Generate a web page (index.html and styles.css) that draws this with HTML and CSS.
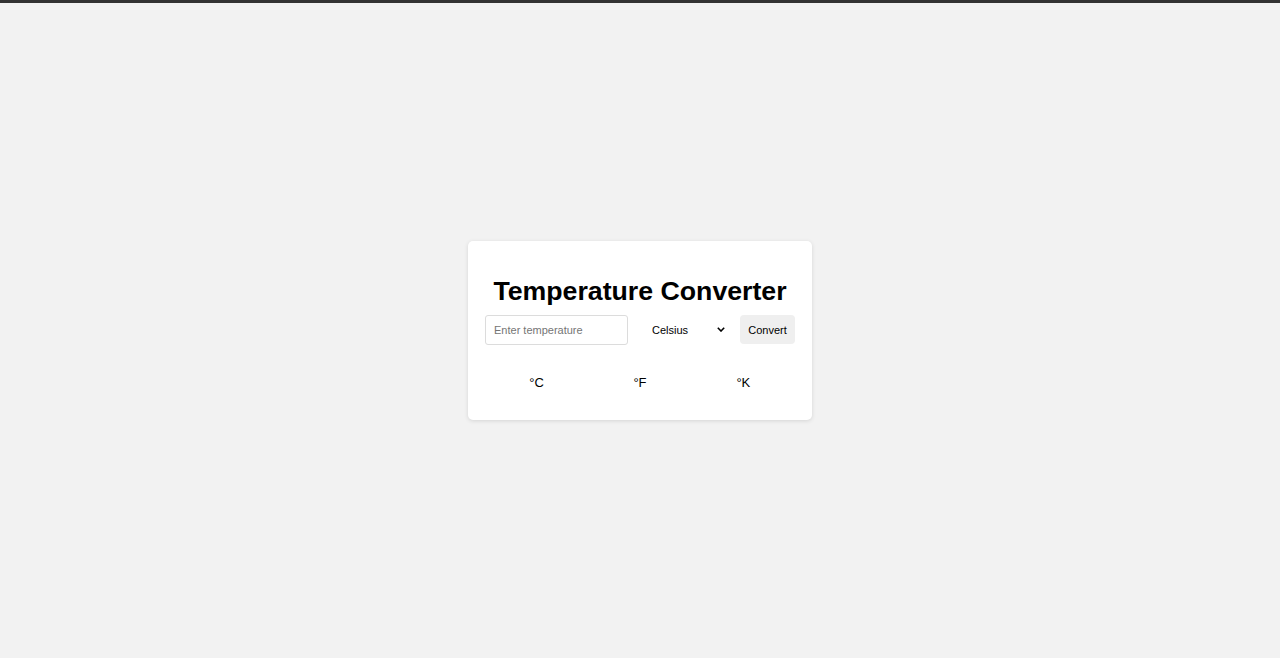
FILE: index.html
```html
<!DOCTYPE html>
<html lang="en">
<head>
<meta charset="utf-8">
<title>Temperature Converter</title>
<link rel="stylesheet" href="styles.css">
</head>
<body>
<main class="card">
  <h1 class="title">Temperature Converter</h1>
  <div class="controls">
    <input class="temp-input" type="text" placeholder="Enter temperature">
    <div class="select-wrap">
      <select class="unit-select">
        <option>Celsius</option>
        <option>Fahrenheit</option>
        <option>Kelvin</option>
      </select>
      <svg class="chevron" width="8" height="5" viewBox="0 0 8 5" aria-hidden="true"><path d="M0.8 0.8 L4 4 L7.2 0.8" fill="none" stroke="#000" stroke-width="1.6"/></svg>
    </div>
    <button class="convert-btn" type="button">Convert</button>
  </div>
  <div class="results">
    <div class="result">°C</div>
    <div class="result">°F</div>
    <div class="result">°K</div>
  </div>
</main>
</body>
</html>
```

FILE: styles.css
```css
html, body {
  margin: 0;
  padding: 0;
}
body {
  background: #f2f2f2;
  border-top: 3px solid #333333;
  height: calc(100vh - 3px);
  display: flex;
  align-items: center;
  justify-content: center;
  font-family: "Liberation Sans", Arial, sans-serif;
  color: #000;
}
.card {
  background: #fff;
  width: 310px;
  padding: 17px;
  border-radius: 5px;
  box-shadow: 0 1px 4px rgba(0, 0, 0, 0.12);
}
.title {
  font-size: 26.7px;
  font-weight: bold;
  text-align: center;
  margin: 18px 0 9px;
  line-height: 30px;
}
.controls {
  display: flex;
  align-items: flex-start;
  gap: 10px;
}
.temp-input {
  box-sizing: border-box;
  width: 143px;
  height: 30px;
  border: 1px solid #dcdcdc;
  border-radius: 3px;
  padding: 0 8px;
  font-family: "Liberation Sans", Arial, sans-serif;
  font-size: 11px;
  color: #000;
  outline: none;
}
.temp-input::placeholder {
  color: #757575;
}
.select-wrap {
  position: relative;
  width: 92px;
  height: 30px;
}
.unit-select {
  -webkit-appearance: none;
  appearance: none;
  box-sizing: border-box;
  width: 100%;
  height: 29px;
  border: none;
  background: #fff;
  padding: 0 0 0 14px;
  font-family: "Liberation Sans", Arial, sans-serif;
  font-size: 11px;
  color: #000;
  outline: none;
}
.chevron {
  position: absolute;
  left: 79px;
  top: 12px;
  pointer-events: none;
}
.convert-btn {
  box-sizing: border-box;
  width: 55px;
  height: 29px;
  border: none;
  border-radius: 4px;
  background: #efefef;
  font-family: "Liberation Sans", Arial, sans-serif;
  font-size: 11px;
  color: #000;
  padding: 0;
}
.results {
  display: flex;
  margin-top: 23px;
  padding-bottom: 5px;
}
.result {
  flex: 1;
  text-align: center;
  font-size: 13px;
  line-height: 30px;
}
```
